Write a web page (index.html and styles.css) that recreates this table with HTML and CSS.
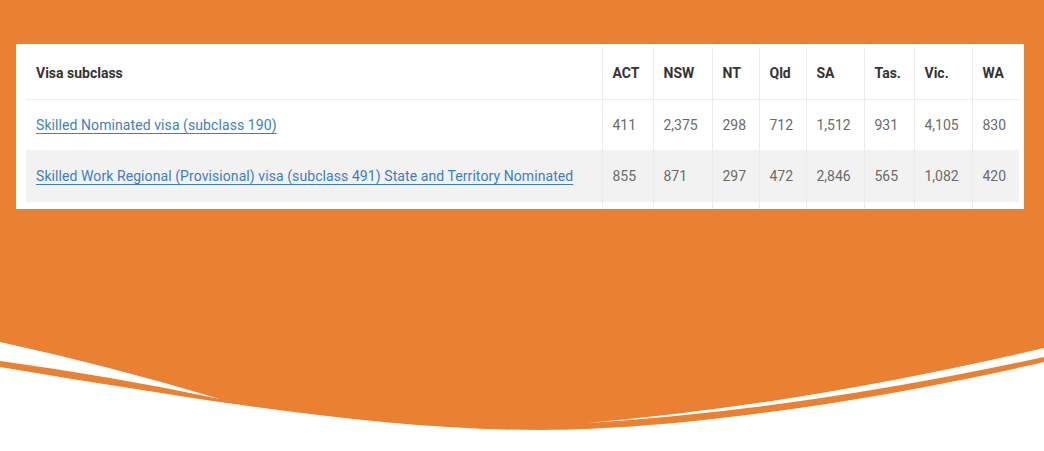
FILE: index.html
```html
<!DOCTYPE html>
<html lang="en">
<head>
<meta charset="utf-8">
<title>State and territory nominations</title>
<link rel="stylesheet" href="styles.css">
</head>
<body>
<div class="hero">
  <div class="card">
    <table class="visa-table">
      <colgroup>
        <col class="c-visa"><col class="c-act"><col class="c-nsw"><col class="c-nt"><col class="c-qld"><col class="c-sa"><col class="c-tas"><col class="c-vic"><col class="c-wa">
      </colgroup>
      <thead>
        <tr>
          <th>Visa subclass</th><th>ACT</th><th>NSW</th><th>NT</th><th>Qld</th><th>SA</th><th>Tas.</th><th>Vic.</th><th>WA</th>
        </tr>
      </thead>
      <tbody>
        <tr>
          <td><a href="#">Skilled Nominated visa (subclass 190)</a></td>
          <td>411</td><td>2,375</td><td>298</td><td>712</td><td>1,512</td><td>931</td><td>4,105</td><td>830</td>
        </tr>
        <tr class="striped">
          <td><a href="#">Skilled Work Regional (Provisional) visa (subclass 491) State and Territory Nominated</a></td>
          <td>855</td><td>871</td><td>297</td><td>472</td><td>2,846</td><td>565</td><td>1,082</td><td>420</td>
        </tr>
        <tr class="spacer">
          <td></td><td></td><td></td><td></td><td></td><td></td><td></td><td></td><td></td>
        </tr>
      </tbody>
    </table>
  </div>
</div>
<svg class="wave" viewBox="0 209 1044 242" width="1044" height="242" aria-hidden="true">
  <path fill="#ffffff" d="M0,367 C200,400 380,430 540,430 C680,430 880,400 1044,362 L1044,451 L0,451 Z"/>
  <path fill="#ffffff" d="M0,342 Q110,366 220,399 Q110,376 0,361 Z"/>
  <path fill="#ffffff" d="M1044,348 Q800,405 587,423 Q800,410 1044,357 Z"/>
</svg>
</body>
</html>
```

FILE: styles.css
```css
html, body {
  margin: 0;
  padding: 0;
}

body {
  background: #e98032;
  width: 1044px;
  height: 451px;
  overflow: hidden;
  font-family: Roboto, "Liberation Sans", Arial, sans-serif;
}

.hero {
  padding: 44px 20px 0 16px;
}

.card {
  background: #ffffff;
  width: 1008px;
  height: 165px;
  box-sizing: border-box;
  padding: 3px 5px 0 10px;
  overflow: hidden;
}

.visa-table {
  border-collapse: collapse;
  table-layout: fixed;
  width: 993px;
  font-size: 14px;
}

.c-visa { width: 576px; }
.c-act { width: 51px; }
.c-nsw { width: 59px; }
.c-nt { width: 47px; }
.c-qld { width: 47px; }
.c-sa { width: 58px; }
.c-tas { width: 50px; }
.c-vic { width: 58px; }
.c-wa { width: 47px; }

.visa-table th,
.visa-table td {
  text-align: left;
  padding: 0 0 0 10px;
  white-space: nowrap;
  border-left: 1px solid #ececec;
  box-sizing: border-box;
}

.visa-table th:first-child,
.visa-table td:first-child {
  border-left: none;
}

.visa-table th {
  height: 52px;
  font-weight: 700;
  color: #333333;
  border-bottom: 1px solid #ececec;
}

.visa-table td {
  height: 52px;
  color: #6b6b6b;
}

.visa-table tbody tr:first-child td {
  height: 51px;
}

.visa-table .striped td {
  background: #f2f2f2;
}

.visa-table a {
  color: #3d7fc2;
  letter-spacing: 0.08px;
  text-decoration: underline;
  text-decoration-thickness: 1px;
  text-underline-offset: 3px;
}

.wave {
  display: block;
}
```
